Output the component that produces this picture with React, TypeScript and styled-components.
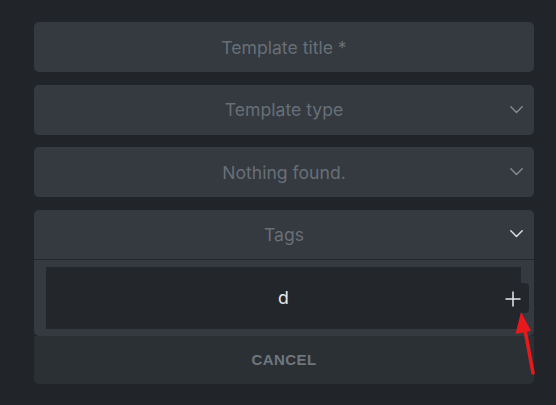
import * as React from "react";
import styled, { createGlobalStyle } from "styled-components";

const GlobalStyle = createGlobalStyle`
  html, body {
    margin: 0;
    padding: 0;
    background: #212529;
  }
  body {
    font-family: Inter, "Noto Sans", sans-serif;
    -webkit-font-smoothing: antialiased;
  }
`;

const Page = styled.div`
  position: relative;
  width: 556px;
  height: 405px;
  overflow: hidden;
  box-sizing: border-box;
  padding: 22px 0 0 34px;
`;

const Form = styled.div`
  width: 500px;
  display: flex;
  flex-direction: column;
  gap: 12.67px;
`;

const Field = styled.div<{ open?: boolean }>`
  height: ${props => (props.open ? "49px" : "50px")};
  display: grid;
  grid-template-columns: 36px 1fr 36px;
  align-items: center;
  background: #343a40;
  border-radius: ${props => (props.open ? "5px 5px 0 0" : "5px")};
  border-bottom: ${props => (props.open ? "1px solid #23272b" : "none")};
`;

const FieldText = styled.div`
  grid-column: 2;
  text-align: center;
  font-size: 17.6px;
  color: #686f77;
  white-space: nowrap;
`;

const ChevronSlot = styled.div<{ active?: boolean }>`
  grid-column: 3;
  display: flex;
  align-items: center;
  color: ${props => (props.active ? "#dee2e6" : "#858b92")};
  padding-left: 12px;
`;

const TagsGroup = styled.div`
  display: flex;
  flex-direction: column;
`;

const Menu = styled.div`
  background: #343a40;
  border-radius: 0 0 5px 5px;
  padding: 7px 13px 7px 12px;
`;

const SearchBox = styled.div`
  position: relative;
  height: 62px;
  display: flex;
  align-items: center;
  justify-content: center;
  background: #23272b;
  color: #e6e9ec;
  font-size: 17.6px;
`;

const AddButton = styled.div`
  position: absolute;
  right: -8px;
  top: 16px;
  width: 32px;
  height: 30px;
  display: flex;
  align-items: center;
  justify-content: center;
  padding-top: 2px;
  box-sizing: border-box;
  background: #23272b;
  border-radius: 4px;
  color: #e6e9ec;
`;

const CancelButton = styled.div`
  height: 48px;
  display: flex;
  align-items: center;
  justify-content: center;
  background: #2b3035;
  border-radius: 0 0 5px 5px;
  font-family: "Liberation Sans", Arial, sans-serif;
  font-weight: 700;
  font-size: 15px;
  letter-spacing: 0.4px;
  color: #6f767d;
`;

const Annotation = styled.svg`
  position: absolute;
  left: 0;
  top: 0;
  pointer-events: none;
`;

function Chevron() {
  return (
    <svg width="13" height="8" viewBox="0 0 13 8" fill="none">
      <polyline
        points="0.8,0.8 6.5,6.5 12.2,0.8"
        stroke="currentColor"
        strokeWidth="1.4"
        strokeLinecap="round"
        strokeLinejoin="round"
      />
    </svg>
  );
}

function PlusIcon() {
  return (
    <svg width="16" height="16" viewBox="0 0 16 16" fill="none">
      <path d="M8 0.5V15.5M0.5 8H15.5" stroke="currentColor" strokeWidth="1.5" />
    </svg>
  );
}

export default function App() {
  return (
    <>
      <GlobalStyle />
      <Page>
        <Form>
          <Field>
            <FieldText>Template title *</FieldText>
          </Field>
          <Field>
            <FieldText>Template type</FieldText>
            <ChevronSlot>
              <Chevron />
            </ChevronSlot>
          </Field>
          <Field>
            <FieldText>Nothing found.</FieldText>
            <ChevronSlot>
              <Chevron />
            </ChevronSlot>
          </Field>
          <TagsGroup>
            <Field open={true}>
              <FieldText>Tags</FieldText>
              <ChevronSlot active={true}>
                <Chevron />
              </ChevronSlot>
            </Field>
            <Menu>
              <SearchBox>
                d
                <AddButton>
                  <PlusIcon />
                </AddButton>
              </SearchBox>
            </Menu>
            <CancelButton>CANCEL</CancelButton>
          </TagsGroup>
        </Form>
        <Annotation width="556" height="405" viewBox="0 0 556 405">
          <line
            x1="533"
            y1="373"
            x2="525"
            y2="330"
            stroke="#e8191c"
            strokeWidth="3.6"
            strokeLinecap="round"
          />
          <polygon points="521,312 515.5,334 531,331" fill="#e8191c" />
        </Annotation>
      </Page>
    </>
  );
}
